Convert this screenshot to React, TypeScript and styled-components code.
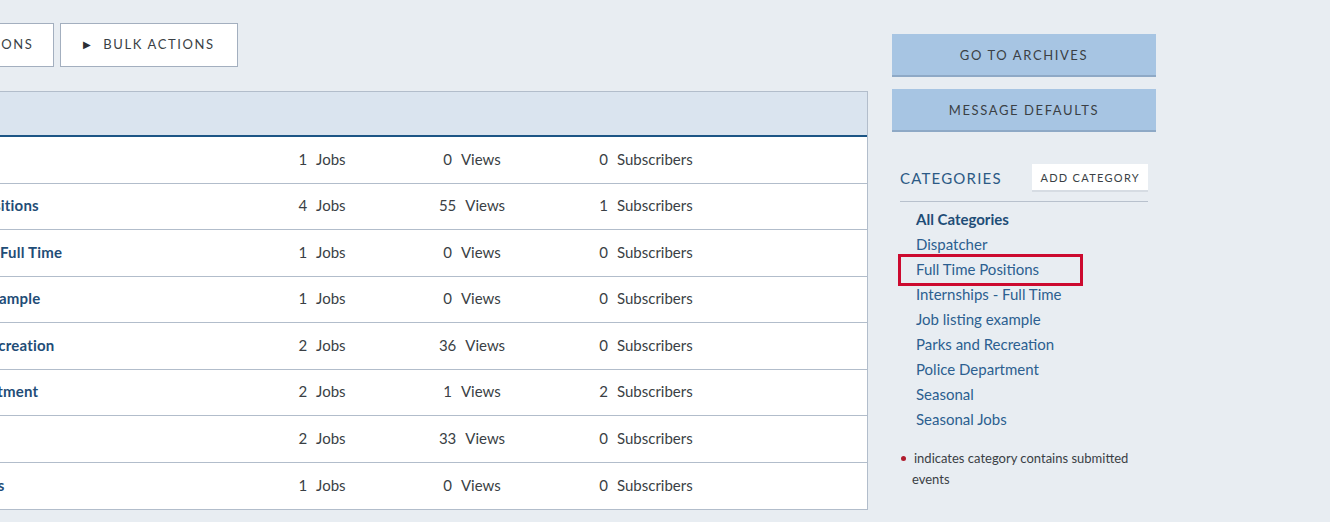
import styled, { createGlobalStyle } from 'styled-components';

const GlobalStyle = createGlobalStyle`
  html, body {
    margin: 0;
    padding: 0;
    background: #e8edf2;
    font-family: Lato, "Liberation Sans", sans-serif;
    color: #3a3f45;
    overflow: hidden;
  }
`;

type Row = { name: string; jobs: number; views: number; subs: number };

const rows: Row[] = [
  { name: 'Dispatcher', jobs: 1, views: 0, subs: 0 },
  { name: 'Full Time Positions', jobs: 4, views: 55, subs: 1 },
  { name: 'Internships - Full Time', jobs: 1, views: 0, subs: 0 },
  { name: 'Job listing example', jobs: 1, views: 0, subs: 0 },
  { name: 'Parks and Recreation', jobs: 2, views: 36, subs: 0 },
  { name: 'Police Department', jobs: 2, views: 1, subs: 2 },
  { name: 'Seasonal', jobs: 2, views: 33, subs: 0 },
  { name: 'Seasonal Jobs', jobs: 1, views: 0, subs: 0 },
];

const categories = [
  'Dispatcher',
  'Full Time Positions',
  'Internships - Full Time',
  'Job listing example',
  'Parks and Recreation',
  'Police Department',
  'Seasonal',
  'Seasonal Jobs',
];

export default function App(): JSX.Element {
  return (
    <>
      <GlobalStyle />
      <Page>
        <Main>
          <Toolbar>
            <ToolButton $width={194}>Category Options</ToolButton>
            <ToolButton $width={178}>
              <Arrow>▶</Arrow>
              Bulk Actions
            </ToolButton>
          </Toolbar>
          <Table>
            <HeaderRow />
            {rows.map((r) => (
              <TableRow key={r.name}>
                <NameCell>{r.name}</NameCell>
                <StatCell>
                  <span>{r.jobs}</span>
                  <span>Jobs</span>
                </StatCell>
                <StatCell>
                  <span>{r.views}</span>
                  <span>Views</span>
                </StatCell>
                <StatCell>
                  <span>{r.subs}</span>
                  <span>Subscribers</span>
                </StatCell>
                <span />
              </TableRow>
            ))}
          </Table>
        </Main>
        <Sidebar>
          <BlueButton>Go to Archives</BlueButton>
          <BlueButton>Message Defaults</BlueButton>
          <CatHeader>
            <CatTitle>Categories</CatTitle>
            <AddButton>Add Category</AddButton>
          </CatHeader>
          <CatList>
            <CatItem $active>All Categories</CatItem>
            {categories.map((c) => (
              <CatItem key={c} $highlight={c === 'Full Time Positions'}>
                {c}
              </CatItem>
            ))}
          </CatList>
          <Note>
            <Dot />
            indicates category contains submitted events
          </Note>
        </Sidebar>
      </Page>
    </>
  );
}

const Page = styled.div`
  display: flex;
  align-items: flex-start;
  gap: 24px;
  margin-left: -140px;
  padding-top: 23px;
`;

const Main = styled.div`
  width: 1008px;
  display: flex;
  flex-direction: column;
`;

const Toolbar = styled.div`
  display: flex;
  gap: 6px;
  margin-bottom: 24px;
`;

const ToolButton = styled.button<{ $width: number }>`
  width: ${({ $width }) => $width}px;
  height: 44px;
  background: #fff;
  border: 1px solid #a3afbf;
  font-family: inherit;
  font-size: 13px;
  letter-spacing: 1.6px;
  text-transform: uppercase;
  color: #3a3f45;
  display: flex;
  align-items: center;
  justify-content: center;
  gap: 12px;
  padding: 0 0 2px 0;
`;

const Arrow = styled.span`
  font-size: 10px;
  color: #2b2f35;
  letter-spacing: 0;
`;

const Table = styled.div`
  background: #fff;
  border: 1px solid #b2bdcb;
  display: flex;
  flex-direction: column;
`;

const HeaderRow = styled.div`
  height: 43px;
  background: #dae4ef;
  border-bottom: 2px solid #1c5585;
`;

const TableRow = styled.div`
  display: grid;
  grid-template-columns: 401px 120px 180px 168px 1fr;
  align-items: center;
  height: 46.5px;
  padding-bottom: 2px;
  box-sizing: border-box;
  border-bottom: 1px solid #b2bdcb;
  font-size: 15px;
  &:last-child {
    border-bottom: none;
  }
`;

const NameCell = styled.span`
  padding-left: 49px;
  font-weight: 700;
  letter-spacing: 0.2px;
  color: #1f4d77;
`;

const StatCell = styled.span`
  display: flex;
  justify-content: center;
  gap: 9px;
  color: #3a3f45;
`;

const Sidebar = styled.div`
  width: 264px;
  padding-top: 11px;
  display: flex;
  flex-direction: column;
`;

const BlueButton = styled.div`
  height: 41px;
  background: #a7c5e3;
  border-bottom: 2px solid #8ea9c6;
  display: flex;
  align-items: center;
  justify-content: center;
  font-size: 13px;
  letter-spacing: 1.6px;
  text-transform: uppercase;
  color: #3a3f45;
  margin-bottom: 12px;
`;

const CatHeader = styled.div`
  margin: 20px 8px 0 8px;
  display: flex;
  align-items: center;
  justify-content: space-between;
  padding-bottom: 9px;
  border-bottom: 1px solid #b8c1cd;
`;

const CatTitle = styled.span`
  font-size: 15px;
  letter-spacing: 1.2px;
  text-transform: uppercase;
  color: #2c5a85;
`;

const AddButton = styled.span`
  background: #fff;
  height: 26px;
  padding: 0 8px;
  display: flex;
  align-items: center;
  border-bottom: 2px solid #d6dce3;
  font-size: 11px;
  letter-spacing: 1.3px;
  text-transform: uppercase;
  color: #3a3f45;
`;

const CatList = styled.div`
  display: flex;
  flex-direction: column;
  padding: 5px 0 0 24px;
`;

const CatItem = styled.span<{ $active?: boolean; $highlight?: boolean }>`
  height: 25px;
  line-height: 25px;
  font-size: 15px;
  font-weight: ${({ $active }) => ($active ? 700 : 400)};
  color: ${({ $active }) => ($active ? '#1f4d77' : '#2c5f90')};
  align-self: flex-start;
  position: relative;
  ${({ $highlight }) =>
    $highlight &&
    `
    &::after {
      content: '';
      position: absolute;
      box-sizing: border-box;
      left: -18px;
      top: -3px;
      width: 185px;
      height: 32px;
      border: 3px solid #cc0a2f;
    }
  `}
`;

const Note = styled.p`
  margin: 16px 8px 0 20px;
  font-size: 13px;
  line-height: 21px;
  color: #3a3f45;
`;

const Dot = styled.span`
  display: inline-block;
  width: 5px;
  height: 5px;
  border-radius: 50%;
  background: #b01c2e;
  margin: 0 8px 2px -11px;
  vertical-align: middle;
`;
